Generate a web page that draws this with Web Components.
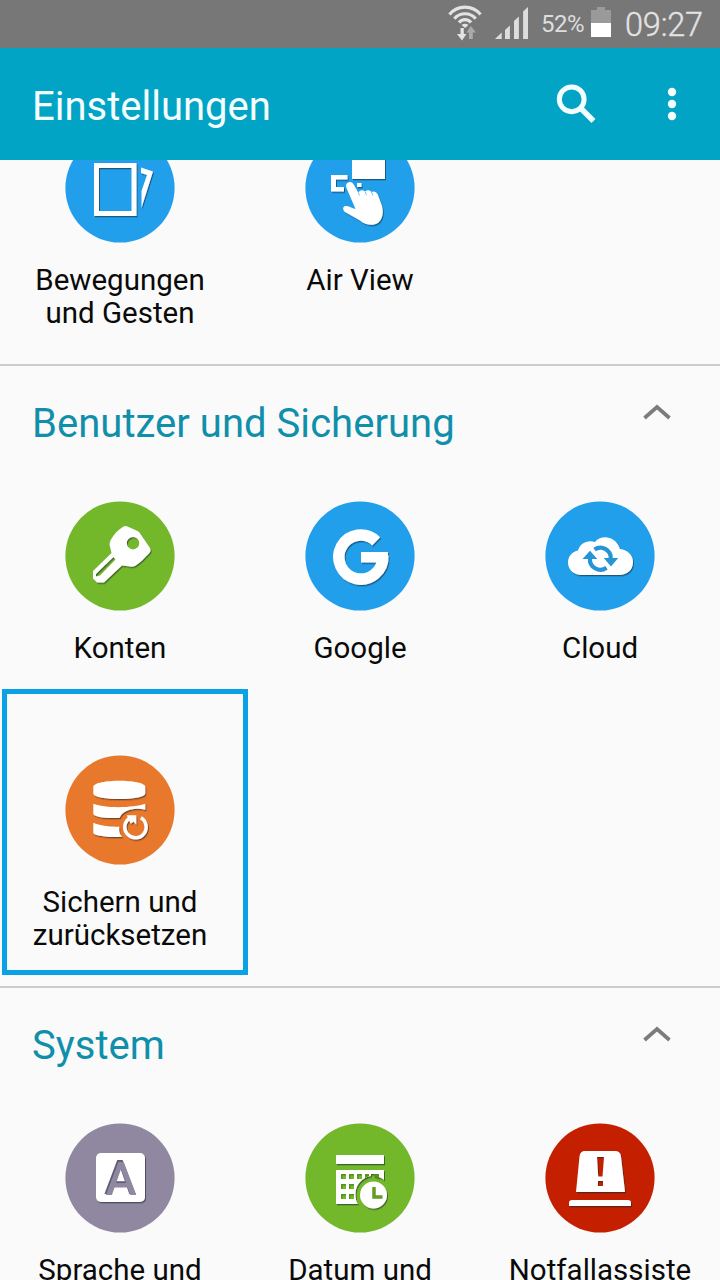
<!DOCTYPE html>
<html lang="de">
<head>
<meta charset="utf-8">
<title>Einstellungen</title>
<style>
html,body{margin:0;height:100%;overflow:hidden;background:#fafafa}
body{font-family:Roboto,"Noto Sans",sans-serif}
</style>
</head>
<body>
<settings-screen></settings-screen>
<script>
const shadow = id => `<defs><filter id="${id}" x="-20%" y="-20%" width="140%" height="140%"><feDropShadow dx="1" dy="1.3" stdDeviation=".45" flood-color="#102030" flood-opacity=".55"/></filter></defs>`;
const ICONS = {
  motion: ['#219feb', `
    <path d="M31.500 32.500H69V80.500H31.500Z" fill="none" stroke="#fff" stroke-width="5"/>
    <path d="M76 34.500L88 38.500L76.500 75V58L82 42L76 40Z"/>`],
  airview: ['#219feb', `
    <path d="M47 15H80V46H47Z"/>
    <path d="M42.500 42H26V58.500H39V54H31V46.500H42.500Z"/>
    <path d="M52 50H56.500V54H52Z"/>
    <path d="M43 49.500C46 48 48 50 49 52L53.500 60C54 57 58 56.500 60 58.500C62 56.500 65 57 66.500 59C69 57.500 72 59.500 73 62L77 73C79 80 77 88 72 90.500C67 93 60 92 55 87.500L40 79C37.500 77 37.500 73.500 40.500 73C43 72.500 47 75 50.500 76L41.500 55C40.500 52.500 41 50.500 43 49.500Z"/>
    <path d="M60 58.500L61.500 62M66.500 59L68 62.500M53.500 60L54.500 62.500" stroke="#77b9e4" stroke-width=".9" fill="none"/>`],
  key: ['#73b72b', `
    <path fill-rule="evenodd" d="M58.500 25.500Q60.500 24.500 62.500 25.500L72.500 30Q74.500 31 75.500 33L85 47Q86.500 50 84 52.500C79.500 57 75.500 61.500 70 65Q67.500 66 65 65.500L57 64.500L39 81.500H32L28 77.500V70L46.500 52L44.500 43.500Q44.500 41 46 38.500C49 33 53 29 58.500 25.500ZM68 36A6.200 6.200 0 1 0 68 48.400A6.200 6.200 0 1 0 68 36ZM48.500 56L31 73V75.500L35 74.500L50.500 58.500Z"/>`],
  google: ['#219feb', `
    <path d="M70.700 39.500A22 22 0 1 0 77.300 54" fill="none" stroke="#fff" stroke-width="11.500" transform="translate(.5 .8)"/>
    <path d="M56 51H83Q83.400 56 82.400 61.500H56Z"/>`],
  cloud: ['#219feb', `
    <path d="M37 74C28 74 23 68 23 61.500C23 55 27.500 50.500 33 49.500C35 42.500 42 38.500 50 41C55 34 70 33.500 75 48C83 49 88 54.500 88 61C88 69 82 74 74 74Z"/>
    <g fill="none" stroke="#2595d6" stroke-width="4.200"><path d="M49.500 48.500A10.500 10.500 0 0 1 65.800 58"/><path d="M61.500 66.800A10.500 10.500 0 0 1 45 57"/></g>
    <path fill="#2595d6" d="M58.800 57H73.200L66 65.500ZM37.500 58H52.300L45 49.800Z"/>`],
  backup: ['#e8782b', `
    <g transform="translate(.3 .8)"><path d="M28 31C29 23 79 23 80 31V38C79 45 29 45 28 38Z"/>
    <path d="M28 48C41 53 68 52 80 48V54C68 51 57 55 54.500 62C43 63 28 61.500 28 58Z"/>
    <path d="M28 67C36 70.500 46 71 54 71C53.500 75 54 78.500 57 81C44 82 28 80 28 77Z"/>
    <path d="M75.500 62A10.700 10.700 0 1 1 64.500 62.200" fill="none" stroke="#fff" stroke-width="3.500"/>
    <path d="M61.500 59.500H71V69L68.200 66L65.500 68L63.500 64Z"/></g>`],
  language: ['#8f88a0', `
    <rect x="31" y="30" width="49" height="49" rx="5"/>
    <text x="55" y="71.300" text-anchor="middle" font-family="Roboto,sans-serif" font-weight="500" font-size="48" fill="#615c73">A</text>
    <text x="56" y="72.200" text-anchor="middle" font-family="Roboto,sans-serif" font-weight="500" font-size="47" fill="#8f88a0">A</text>`],
  date: ['#73b72b', `
    <path d="M31 32H79V41H31Z"/>
    <path d="M31 47H79V57C75 53.500 72 54 71 53.500V51H66V53C57 54.500 50.500 62 50.500 71C50.500 75 51 78.500 53 81H31Z"/>
    <g fill="#57921d"><path d="M36 51H41V56H36ZM44 51H49V56H44ZM52 51H57V56H52ZM60 51H64V53L60 55ZM36 61H41V66H36ZM44 61H49V66H44ZM36 71H41V76H36ZM44 71H49V76H44ZM69 51H74V55L69 53.500Z"/></g>
    <g fill="#73b72b"><path d="M37.500 52.500H41V56H37.500ZM45.500 52.500H49V56H45.500ZM53.500 52.500H57V56H53.500ZM37.500 62.500H41V66H37.500ZM45.500 62.500H49V66H45.500ZM37.500 72.500H41V76H37.500ZM45.500 72.500H49V76H45.500Z"/></g>
    <circle cx="68.500" cy="72" r="13.500"/>
    <path d="M69 64V74H77.500" fill="none" stroke="#629d25" stroke-width="3.500"/>`],
  emergency: ['#c42000', `
    <path fill-rule="evenodd" d="M40 28H70Q75.500 28 76 33.500L80 69H31L34.500 33.500Q35 28 40 28ZM52 34L53.200 53.500H57.500L59 34ZM53 58V63H58V58Z"/>
    <path d="M24 83V80Q24 77 27 77H83Q86 77 86 80V83Z"/>`]
};

class StatusBar extends HTMLElement {
  constructor(){ super(); this.attachShadow({mode:'open'}).innerHTML = `
  <style>
    :host{display:flex;box-sizing:border-box;height:48px;background:#777;color:#e3e3e3;justify-content:flex-end;padding-right:17px;flex:none}
    svg{display:block;flex:none}
    .pct{font-size:24px;line-height:48px;letter-spacing:-.5px;width:49px;color:#ddd;font-weight:400}
    .time{font-size:32.500px;line-height:48px;padding-top:1px;box-sizing:border-box;width:78px;font-weight:300;letter-spacing:-.2px;white-space:nowrap;-webkit-text-stroke:.35px #e3e3e3}
  </style>
  <svg width="93" height="48" viewBox="448 0 93 48">
    <g fill="none" stroke="#e3e3e3" stroke-width="3.200"><path d="M449.500 14.500A20 20 0 0 1 480.500 14.500"/><path d="M454.300 18.700A14 14 0 0 1 475.700 18.700"/><path d="M459 22.500A7.600 7.600 0 0 1 471 22.500"/></g>
    <path d="M461.500 25Q465 22.500 468.500 25L465 28Z" fill="#e3e3e3"/>
    <path d="M460.500 28H463.800V34H466.500L462 40.500L457 34H460.500Z" fill="#e3e3e3"/>
    <path d="M469 39V32.500H466.500L470.800 26L476 32.500H472.800V39Z" fill="#aaa"/>
    <path d="M495 39L501.700 32.500V39ZM505 30L509.900 25.500V39H505ZM514 21L518.900 16.500V39H514ZM523.100 11.500L528 7V39H523.100Z" fill="#ddd"/>
  </svg>
  <span class="pct">52%</span>
  <svg width="35" height="48" viewBox="590 0 35 48"><path d="M591 10H597V7H605V10H611V23H591Z" fill="#9a9a9a"/><path d="M591 23H611V37H591Z" fill="#fff"/></svg>
  <span class="time">09:27</span>`; }
}
class AppBar extends HTMLElement {
  constructor(){ super(); this.attachShadow({mode:'open'}).innerHTML = `
  <style>
    :host{display:flex;box-sizing:border-box;height:112px;background:#02a4c5;color:#f4fdff;align-items:center;padding:4px 42px 0 32px;flex:none}
    h1{font-size:40px;font-weight:400;line-height:48px;margin:2px 0 0;flex:1}
    svg{display:block;margin-bottom:4px}
    .dots{margin-left:70px}
  </style>
  <h1><slot></slot></h1>
  <svg width="40" height="40" viewBox="556 84 40 40"><circle cx="571.700" cy="99.300" r="12.400" fill="none" stroke="#f4fdff" stroke-width="5"/><path d="M580.500 108L593.500 121" stroke="#f4fdff" stroke-width="5.500"/></svg>
  <svg class="dots" width="12" height="36" viewBox="666 86 12 36" fill="#f4fdff"><circle cx="672" cy="92" r="4.200"/><circle cx="672" cy="104" r="4.200"/><circle cx="672" cy="116" r="4.200"/></svg>`; }
}
class SettingTile extends HTMLElement {
  connectedCallback(){
    const [color, art] = ICONS[this.getAttribute('icon')];
    this.attachShadow({mode:'open'}).innerHTML = `
  <style>
    :host{display:flex;flex-direction:column;align-items:center;gap:21px;position:relative;height:196px}
    svg{display:block;flex:none}
    .label{font-size:29.500px;line-height:33px;color:#0a0a0a;text-align:center;white-space:pre-line}
    :host([selected])::after{content:"";position:absolute;left:2px;top:-66px;width:246px;height:286px;box-sizing:border-box;border:5px solid #0aa2e6}
  </style>
  <svg width="110" height="110" viewBox="0 0 110 110">${shadow('s')}<circle cx="55" cy="55" r="54.600" fill="${color}"/><g fill="#fff" filter="url(#s)">${art}</g></svg>
  <div class="label"><slot></slot></div>`; }
}
class SettingsSection extends HTMLElement {
  connectedCallback(){
    const title = this.getAttribute('heading');
    this.attachShadow({mode:'open'}).innerHTML = `
  <style>
    :host{display:flex;flex-direction:column;flex:none;border-bottom:2px solid #ccc}
    :host([scrolled]){height:204px;overflow:hidden;justify-content:flex-end}
    header{display:flex;align-items:center;justify-content:space-between;height:114px;margin-bottom:21px;padding:0 48px 0 32px}
    h2{font-size:40px;line-height:48px;font-weight:400;color:#108fab;margin:2px 0 0;letter-spacing:.03px}
    svg{display:block;margin-bottom:22px}
    .grid{display:grid;grid-template-columns:repeat(3,240px);row-gap:58px;padding-bottom:35px}
  </style>
  ${title ? `<header><h2>${title}</h2><svg width="30" height="18" viewBox="0 0 30 18"><path d="M2.500 15L15 4L27.500 15" fill="none" stroke="#7c7c7c" stroke-width="3.700"/></svg></header>` : ''}
  <div class="grid"><slot></slot></div>`; }
}
class SettingsScreen extends HTMLElement {
  constructor(){ super(); this.attachShadow({mode:'open'}).innerHTML = `
  <style>:host{display:flex;flex-direction:column;width:720px;height:1280px;overflow:hidden;background:#fafafa}main{display:flex;flex-direction:column;flex:1;min-height:0;overflow:hidden}</style>
  <status-bar></status-bar>
  <app-bar>Einstellungen</app-bar>
  <main>
    <settings-section scrolled>
      <setting-tile icon="motion">Bewegungen
und Gesten</setting-tile>
      <setting-tile icon="airview">Air View</setting-tile>
    </settings-section>
    <settings-section heading="Benutzer und Sicherung">
      <setting-tile icon="key">Konten</setting-tile>
      <setting-tile icon="google">Google</setting-tile>
      <setting-tile icon="cloud">Cloud</setting-tile>
      <setting-tile icon="backup" selected>Sichern und
zurücksetzen</setting-tile>
    </settings-section>
    <settings-section heading="System">
      <setting-tile icon="language">Sprache und</setting-tile>
      <setting-tile icon="date">Datum und</setting-tile>
      <setting-tile icon="emergency">Notfallassiste</setting-tile>
    </settings-section>
  </main>`; }
}
customElements.define('status-bar', StatusBar);
customElements.define('app-bar', AppBar);
customElements.define('setting-tile', SettingTile);
customElements.define('settings-section', SettingsSection);
customElements.define('settings-screen', SettingsScreen);
</script>
</body>
</html>
